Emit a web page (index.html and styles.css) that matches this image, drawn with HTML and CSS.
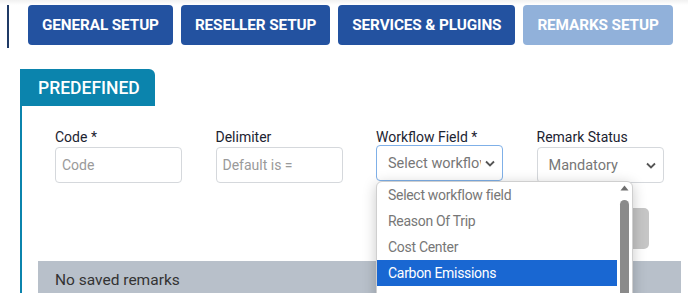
FILE: index.html
```html
<!DOCTYPE html>
<html>
<head>
<meta charset="utf-8">
<link rel="stylesheet" href="styles.css">
</head>
<body>
<div class="topbar">
  <span class="divider"></span>
  <nav class="tabs">
    <button class="tab-btn">GENERAL SETUP</button>
    <button class="tab-btn">RESELLER SETUP</button>
    <button class="tab-btn">SERVICES &amp; PLUGINS</button>
    <button class="tab-btn disabled">REMARKS SETUP</button>
  </nav>
</div>
<section class="section">
  <div class="section-tab">PREDEFINED</div>
  <div class="panel">
    <div class="form-row">
      <div class="field">
        <label class="label">Code *</label>
        <input class="input" placeholder="Code">
      </div>
      <div class="field">
        <label class="label">Delimiter</label>
        <input class="input" placeholder="Default is =">
      </div>
      <div class="field field-dd">
        <label class="label">Workflow Field *</label>
        <div class="select focused"><span class="select-text">Select workflow field</span><svg class="chev" width="10" height="7" viewBox="0 0 10 7"><path d="M1 1.5 L5 5.5 L9 1.5" fill="none" stroke="#555" stroke-width="1.8"/></svg></div>
        <div class="dropdown">
          <ul class="options">
            <li class="opt">Select workflow field</li>
            <li class="opt">Reason Of Trip</li>
            <li class="opt">Cost Center</li>
            <li class="opt active">Carbon Emissions</li>
          </ul>
          <div class="scroll">
            <svg class="scroll-up" width="9" height="6" viewBox="0 0 9 6"><path d="M0.5 5.5 L4.5 0.5 L8.5 5.5 Z" fill="#6e6e6e"/></svg>
            <div class="thumb"></div>
          </div>
        </div>
      </div>
      <div class="field">
        <label class="label">Remark Status</label>
        <div class="select"><span class="select-text">Mandatory</span><svg class="chev" width="10" height="7" viewBox="0 0 10 7"><path d="M1 1.5 L5 5.5 L9 1.5" fill="none" stroke="#555" stroke-width="1.8"/></svg></div>
      </div>
    </div>
    <div class="actions">
      <button class="add-btn">Add</button>
    </div>
    <div class="empty">No saved remarks</div>
  </div>
</section>
</body>
</html>
```
FILE: styles.css
```css
* { box-sizing: border-box; }
html, body { margin: 0; padding: 0; }
body {
  width: 688px;
  height: 293px;
  overflow: hidden;
  background: #fff;
  font-family: Roboto, "Liberation Sans", sans-serif;
  position: relative;
}
.topbar {
  display: flex;
  align-items: flex-start;
  padding-top: 5px;
  padding-left: 7px;
  background: linear-gradient(#f1f1f1 0, #fff 5px);
}
.divider {
  width: 2px;
  height: 43px;
  background: #1f3a66;
}
.tabs {
  display: flex;
  gap: 8px;
  margin-left: 19px;
}
.tab-btn {
  height: 40px;
  padding: 0 14px;
  border: none;
  border-radius: 4px;
  background: #2352a0;
  color: #fff;
  font-family: Roboto, "Liberation Sans", sans-serif;
  font-weight: 700;
  font-size: 15.3px;
  letter-spacing: -0.1px;
}
.tab-btn.disabled { background: #91b1da; }
.section {
  margin-top: 21px;
  margin-left: 20px;
}
.section-tab {
  display: inline-block;
  height: 37px;
  line-height: 38px;
  width: 135px;
  padding-left: 18px;
  background: #0b84ad;
  color: #fff;
  font-size: 17.5px;
  font-weight: 500;
  border-top-right-radius: 6px;
  vertical-align: top;
}
.panel {
  border-left: 2px solid #0b84ad;
  padding-top: 21px;
  padding-right: 7px;
}
.form-row {
  display: grid;
  grid-template-columns: repeat(4, 127px);
  column-gap: 33.5px;
  padding-left: 33px;
}
.field { position: relative; }
.label {
  display: block;
  font-size: 14px;
  line-height: 20px;
  color: #1c2331;
}
.input {
  display: block;
  width: 127px;
  height: 36px;
  border: 1px solid #d5d8dc;
  border-radius: 4px;
  padding: 0 6px;
  font-family: Roboto, "Liberation Sans", sans-serif;
  font-size: 14px;
  color: #333;
  background: #fff;
}
.input::placeholder { color: #9a9a9a; }
.select {
  display: flex;
  align-items: center;
  justify-content: space-between;
  height: 36px;
  border: 1px solid #d5d8dc;
  border-radius: 4px;
  padding: 0 7px 0 11px;
  font-size: 14.5px;
  color: #777;
  background: #fff;
}
.select.focused { border-color: #7fb0e8; margin-top: -2px; }
.select-text {
  white-space: nowrap;
  overflow: hidden;
  flex: 1;
  margin-right: 4px;
}
.chev { flex: none; }
.dropdown {
  position: absolute;
  left: 0;
  top: 54px;
  width: 257px;
  height: 130px;
  background: #fff;
  border: 1px solid #cfcfcf;
  border-radius: 6px 6px 0 0;
  box-shadow: 0 3px 14px rgba(0,0,0,0.22);
  display: flex;
  z-index: 5;
  overflow: hidden;
}
.options {
  list-style: none;
  margin: 0;
  padding: 0;
  width: 241px;
}
.opt {
  height: 26px;
  line-height: 26px;
  padding-left: 11px;
  font-size: 14px;
  letter-spacing: -0.3px;
  color: #777;
}
.opt.active { background: #1967d2; color: #fff; }
.scroll {
  width: 15px;
  display: flex;
  flex-direction: column;
  align-items: center;
  padding-top: 3px;
}
.scroll-up { margin-bottom: 9px; }
.thumb {
  width: 9px;
  flex: 1;
  background: #8a8a8a;
  border-radius: 5px 5px 0 0;
}
.actions {
  display: flex;
  justify-content: flex-end;
  padding-right: 32px;
  margin-top: 25px;
}
.add-btn {
  width: 90px;
  height: 41px;
  border: none;
  border-radius: 5px;
  background: #c6c6c6;
  color: #fff;
  font-size: 14px;
}
.empty {
  margin-top: 12px;
  margin-left: 16px;
  height: 34px;
  background: #b8c0ca;
  padding-left: 17px;
  line-height: 38px;
  font-size: 15.5px;
  color: #333;
}
```
